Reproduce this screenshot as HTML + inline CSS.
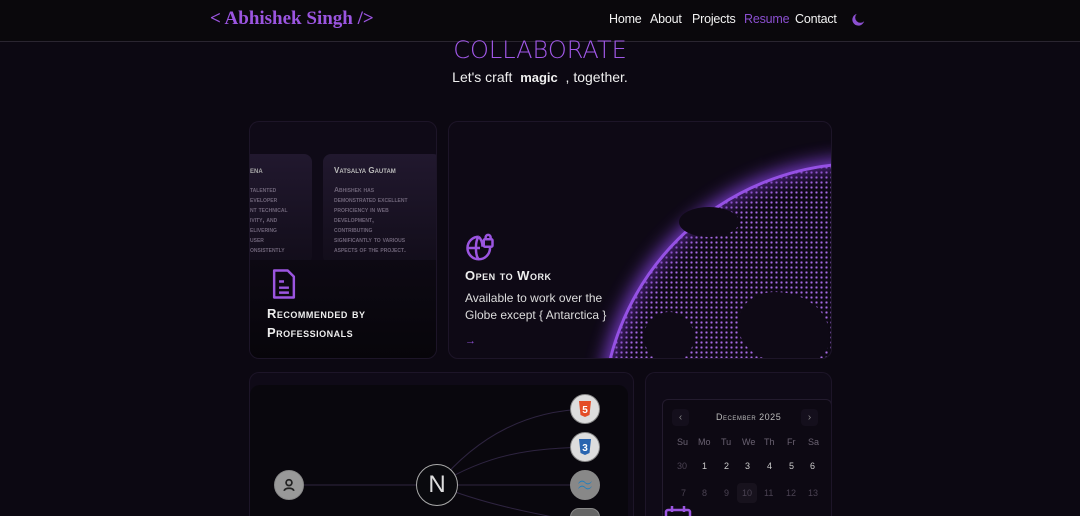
<!DOCTYPE html>
<html><head><meta charset="utf-8"><style>
*{margin:0;padding:0;box-sizing:border-box}
html,body{width:1080px;height:516px;overflow:hidden}
body{background:#0c0812;font-family:"Liberation Sans","DejaVu Sans",sans-serif;color:#eee;position:relative}
.hdr{position:absolute;left:0;top:0;width:1080px;height:42px;background:#0a080c;border-bottom:1px solid #2a2530}
.logo{position:absolute;left:210px;top:8px;font-family:"Liberation Serif",serif;font-weight:bold;font-size:19px;color:#9b55e0}
.nav{position:absolute;top:12px;font-size:12.5px;color:#f2f2f2;letter-spacing:-.2px}
.card{position:absolute;border-radius:10px;background:#0f0a17;border:1px solid #1d1528;overflow:hidden}
.sc{font-variant:small-caps;font-weight:bold;letter-spacing:.5px}
.t{position:absolute;border-radius:8px;background:linear-gradient(#21182e,#120d1a);}
.t p{font-size:7px;color:#6e6478;font-variant:small-caps;font-weight:bold;line-height:10px}
.ic{position:absolute;width:30px;height:30px;border-radius:50%;background:#ddd;border:1px solid #888}
.d{position:absolute;font-size:9px;color:#6a6272}
</style></head><body>
<div class="hdr"></div>
<div class="logo">&lt; Abhishek Singh /&gt;</div>
<div class="nav" style="left:609px">Home</div>
<div class="nav" style="left:650px">About</div>
<div class="nav" style="left:692px">Projects</div>
<div class="nav" style="left:744px;color:#8b4fd0">Resume</div>
<div class="nav" style="left:795px">Contact</div>
<svg style="position:absolute;left:850px;top:11px" width="17" height="17" viewBox="0 0 24 24"><path d="M20 14.5A8.5 8.5 0 1 1 9.5 4a7 7 0 0 0 10.5 10.5z" fill="#8b4fd0"/></svg>
<div style="position:absolute;left:0;width:1080px;top:36px;text-align:center;font-size:24px;color:#a158e8;font-family:'DejaVu Sans',sans-serif;font-weight:200">COLLABORATE</div>
<div style="position:absolute;left:0;width:1080px;top:69px;text-align:center;font-size:14px;color:#f0f0f0">Let's craft &nbsp;<b style="font-size:13px">magic</b>&nbsp; , together.</div>

<div class="card" style="left:249px;top:121px;width:188px;height:238px">
 <div class="t" style="left:-20px;top:32px;width:82px;height:110px;padding:12px 8px 0 20px"><p style="color:#aaa;font-size:8px;margin-bottom:10px">ena</p><p>talented<br>eveloper<br>nt technical<br>ivity, and<br>elivering<br>user<br>onsistently</p></div>
 <div class="t" style="left:73px;top:32px;width:118px;height:110px;padding:12px 11px 0"><p style="color:#bbb;font-size:8px;margin-bottom:10px">Vatsalya Gautam</p><p>Abhishek has<br>demonstrated excellent<br>proficiency in web<br>development,<br>contributing<br>significantly to various<br>aspects of the project.</p></div>
 <div style="position:absolute;left:0;top:138px;width:188px;height:100px;background:linear-gradient(#0d0913,#07050a)"></div>
 <svg style="position:absolute;left:19px;top:146px" width="30" height="32" viewBox="0 0 24 26"><path d="M4 2h11l5 5v17H4z" fill="none" stroke="#9b55e0" stroke-width="2" stroke-linejoin="round"/><path d="M8 11h4M8 16h8M8 20h8" stroke="#9b55e0" stroke-width="2"/></svg>
 <div class="sc" style="position:absolute;left:17px;top:182px;font-size:13px;line-height:19px;color:#eee">Recommended by<br>Professionals</div>
</div>

<div class="card" style="left:448px;top:121px;width:384px;height:238px;background:#0e0915">
 <div style="position:absolute;left:152px;top:40px;width:520px;height:520px;border-radius:50%;border:3px solid #9d55f0;box-shadow:0 0 18px 4px #7d3ed0, inset 0 0 20px #6a30b0;background:radial-gradient(circle,#b070f0 1px,transparent 1.3px) 0 0/5px 5px,#0e0915;opacity:.95"></div>
 <div style="position:absolute;left:230px;top:85px;width:60px;height:30px;background:#0e0915;border-radius:50%"></div>
 <div style="position:absolute;left:290px;top:170px;width:90px;height:70px;background:#0e0915;border-radius:40% 60% 30% 50%"></div>
 <div style="position:absolute;left:195px;top:190px;width:50px;height:50px;background:#0e0915;border-radius:50%"></div>
 <svg style="position:absolute;left:16px;top:111px" width="30" height="30" viewBox="0 0 24 24" fill="none" stroke="#9b55e0" stroke-width="2"><path d="M20 12a9 9 0 1 1-9-9M3 12h9M11 3c-3 3-3 15 0 18M11 3c2 2 3 5 3 8"/><rect x="15" y="5" width="7" height="6" rx="1"/><path d="M16.5 5V3.5a2 2 0 0 1 4 0V5"/></svg>
 <div class="sc" style="position:absolute;left:16px;top:146px;font-size:13px;color:#eee">Open to Work</div>
 <div style="position:absolute;left:16px;top:168px;font-size:12px;line-height:17px;color:#ddd">Available to work over the<br>Globe except { Antarctica }</div>
 <div style="position:absolute;left:16px;top:213px;font-size:11px;color:#8b4fd0">→</div>
</div>

<div class="card" style="left:249px;top:372px;width:385px;height:144px;border-bottom:0;border-radius:10px 10px 0 0">
 <div style="position:absolute;left:0;top:12px;width:378px;height:132px;background:#09070d;border-radius:10px 10px 0 0"></div>
 <svg style="position:absolute;left:0;top:0" width="385" height="144"><g fill="none" stroke="#2e2440" stroke-width="1"><path d="M40 112H187"/><path d="M187 112C230 60 280 38 335 36"/><path d="M187 112C240 80 280 76 335 74"/><path d="M187 112H335"/><path d="M187 112C230 130 280 140 335 150"/></g></svg>
 <div class="ic" style="left:24px;top:97px;background:#999"><svg width="28" height="28" viewBox="0 0 24 24" fill="none" stroke="#222" stroke-width="1.5"><circle cx="12" cy="10" r="2.5"/><path d="M8 17c0-3 8-3 8 0"/></svg></div>
 <div style="position:absolute;left:166px;top:91px;width:42px;height:42px;border-radius:50%;background:#0a0a0e;border:1.5px solid #aaa;color:#ddd;font-size:24px;text-align:center;line-height:39px">N</div>
 <div class="ic" style="left:320px;top:21px"><svg width="28" height="28" viewBox="0 0 28 28"><path d="M8 6h12l-1.5 14L14 22l-4.5-2z" fill="#e44d26"/><text x="14" y="18" font-size="10" fill="#fff" text-anchor="middle" font-weight="bold">5</text></svg></div>
 <div class="ic" style="left:320px;top:59px"><svg width="28" height="28" viewBox="0 0 28 28"><path d="M8 6h12l-1.5 14L14 22l-4.5-2z" fill="#2965b0"/><text x="14" y="18" font-size="10" fill="#fff" text-anchor="middle" font-weight="bold">3</text></svg></div>
 <div class="ic" style="left:320px;top:97px;background:#888"><svg width="28" height="28" viewBox="0 0 28 28" fill="#1e7fc0"><path d="M7 13c2-4 5-4 7-2s4 2 7-1c-2 4-5 4-7 2s-4-2-7 1zM7 18c2-4 5-4 7-2s4 2 7-1c-2 4-5 4-7 2s-4-2-7 1z"/></svg></div>
 <div class="ic" style="left:320px;top:135px;height:9px;border-radius:15px 15px 0 0;background:#666"></div>
</div>

<div class="card" style="left:645px;top:372px;width:187px;height:144px;border-bottom:0;border-radius:10px 10px 0 0">
 <div style="position:absolute;left:16px;top:26px;width:170px;height:118px;border:1px solid #231b2e;border-bottom:0;border-radius:6px 6px 0 0;background:#0d0913"></div>
 <div style="position:absolute;left:26px;top:36px;width:17px;height:17px;border-radius:4px;background:#140f1c;color:#888;font-size:10px;text-align:center;line-height:17px">‹</div>
 <div style="position:absolute;left:155px;top:36px;width:17px;height:17px;border-radius:4px;background:#140f1c;color:#888;font-size:10px;text-align:center;line-height:17px">›</div>
 <div class="sc" style="position:absolute;left:70px;top:39px;font-size:9px;color:#bbb;font-weight:normal">December 2025</div>
 <div class="d" style="left:31px;top:64px">Su</div><div class="d" style="left:52px;top:64px">Mo</div><div class="d" style="left:75px;top:64px">Tu</div><div class="d" style="left:96px;top:64px">We</div><div class="d" style="left:118px;top:64px">Th</div><div class="d" style="left:141px;top:64px">Fr</div><div class="d" style="left:162px;top:64px">Sa</div>
 <div class="d" style="left:31px;top:88px;color:#4a4252">30</div><div class="d" style="left:56px;top:88px;color:#ccc">1</div><div class="d" style="left:78px;top:88px;color:#ccc">2</div><div class="d" style="left:99px;top:88px;color:#ccc">3</div><div class="d" style="left:121px;top:88px;color:#ccc">4</div><div class="d" style="left:143px;top:88px;color:#ccc">5</div><div class="d" style="left:164px;top:88px;color:#ccc">6</div>
 <div style="position:absolute;left:91px;top:110px;width:20px;height:20px;border-radius:4px;background:#17121d"></div>
 <div class="d" style="left:35px;top:115px;color:#4a4252">7</div><div class="d" style="left:56px;top:115px;color:#4a4252">8</div><div class="d" style="left:78px;top:115px;color:#4a4252">9</div><div class="d" style="left:96px;top:115px;color:#4a4252">10</div><div class="d" style="left:118px;top:115px;color:#4a4252">11</div><div class="d" style="left:140px;top:115px;color:#4a4252">12</div><div class="d" style="left:162px;top:115px;color:#4a4252">13</div>
 <svg style="position:absolute;left:18px;top:132px" width="30" height="12" viewBox="0 0 30 12" fill="none" stroke="#9b55e0" stroke-width="2.5"><rect x="2" y="5" width="24" height="16" rx="2"/><path d="M8 1v6M20 1v6"/></svg>
</div>
</body></html>
